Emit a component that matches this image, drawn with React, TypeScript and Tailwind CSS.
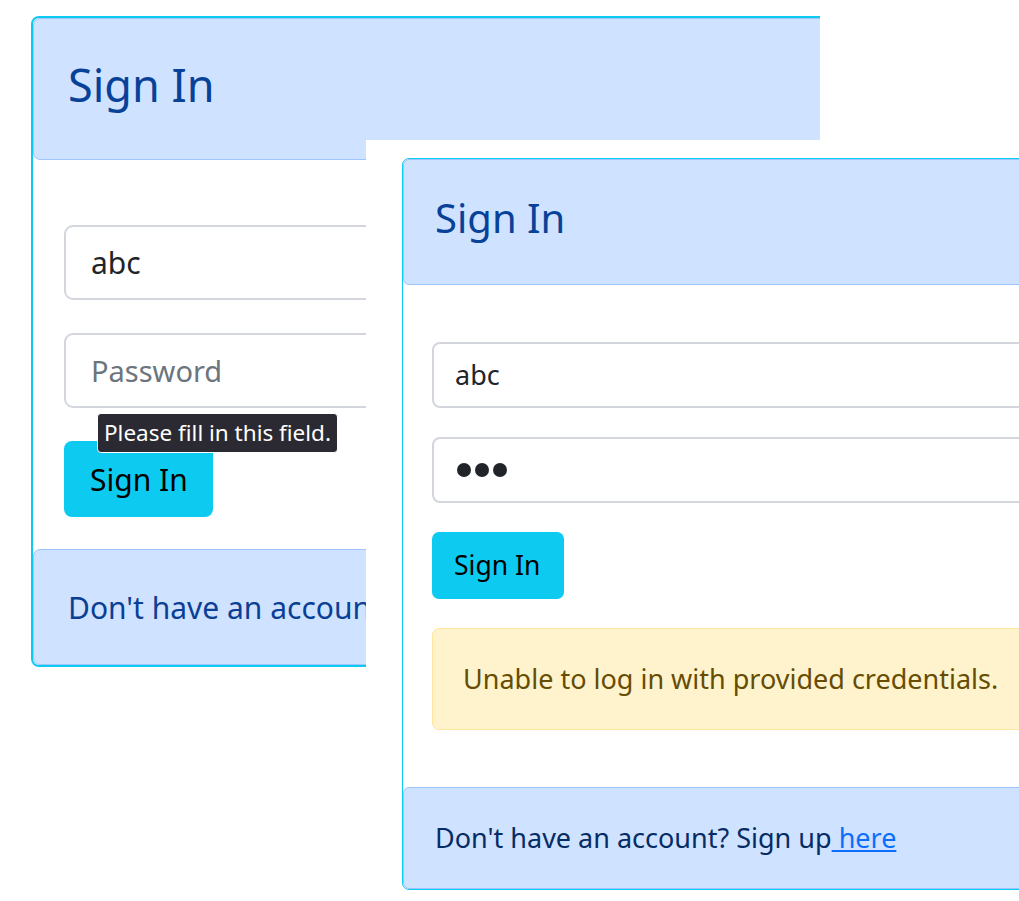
export default function App() {
  return (
    <div
      className="relative w-[1019px] h-[901px] overflow-hidden bg-white"
      style={{ fontFamily: '"Noto Sans", "Open Sans", sans-serif' }}
    >
      {/* First screenshot (larger, partly covered) */}
      <div className="absolute left-[31px] top-[16px] w-[789px] overflow-hidden">
        <div className="w-[1000px] border-2 border-[#0dcaf0] rounded-[8px] bg-white">
          <div className="h-[142px] flex items-center px-[34px] bg-[#cfe2ff] border border-[#9ec5fe] rounded-[7px]">
            <h1 className="text-[45px] leading-none text-[#084298] -mt-[10px]">Sign In</h1>
          </div>
          <div className="pt-[65px] pb-[32px] px-[31px] flex flex-col gap-[33px] items-start">
            <div className="w-full h-[75px] border-2 border-[#d3d7dd] rounded-[9px] flex items-center px-[25px] text-[30px] text-[#212529]">
              abc
            </div>
            <div className="w-full h-[75px] border-2 border-[#d3d7dd] rounded-[9px] flex items-center px-[25px] text-[29px] text-[#6c757d]">
              Password
            </div>
            <div className="relative">
              <button className="h-[76px] w-[149px] bg-[#0dcaf0] rounded-[8px] text-[30px] text-black text-left pl-[26px]">
                Sign In
              </button>
              <div className="absolute left-[33px] -top-[28px] h-[40px] px-[6px] flex items-center bg-[#2b2a33] border border-white rounded-[4px] text-white text-[22.5px] whitespace-nowrap">
                Please fill in this field.
              </div>
            </div>
          </div>
          <div className="h-[116px] flex items-center px-[34px] bg-[#cfe2ff] border border-[#9ec5fe] rounded-[7px]">
            <p className="text-[30px] text-[#0a3f96] whitespace-nowrap">
              Don't have an account? Sign up <a className="text-[#0d6efd] underline">here</a>
            </p>
          </div>
        </div>
      </div>

      {/* Second screenshot on top */}
      <div className="absolute left-[366px] top-[140px] right-0 bottom-0 bg-white overflow-hidden">
        <div className="ml-[36px] mt-[18px] w-[800px] border border-[#0dcaf0] rounded-[7px] bg-white">
          <div className="h-[126px] flex items-center px-[31px] bg-[#cfe2ff] border border-[#9ec5fe] rounded-[6px]">
            <h1 className="text-[40px] leading-none text-[#084298] -mt-[9px]">Sign In</h1>
          </div>
          <div className="pt-[57px] pb-[57px] px-[29px] flex flex-col gap-[29px] items-start">
            <div className="w-full h-[66px] border-2 border-[#d3d7dd] rounded-[8px] flex items-center px-[21px] text-[27px] text-[#212529]">
              abc
            </div>
            <div className="w-full h-[66px] border-2 border-[#d3d7dd] rounded-[8px] flex items-center px-[22px]">
              <span className="flex gap-[4px] ml-[1px]">
                <span className="w-[14px] h-[14px] rounded-full bg-[#212529]" />
                <span className="w-[14px] h-[14px] rounded-full bg-[#212529]" />
                <span className="w-[14px] h-[14px] rounded-full bg-[#212529]" />
              </span>
            </div>
            <button className="h-[67px] w-[132px] bg-[#0dcaf0] rounded-[7px] text-[26.5px] text-black text-left pl-[22px]">
              Sign In
            </button>
            <div className="w-full h-[102px] flex items-center px-[30px] bg-[#fff3cd] border border-[#ffe69c] rounded-[7px] text-[27px] text-[#664d03] whitespace-nowrap">
              Unable to log in with provided credentials.
            </div>
          </div>
          <div className="h-[102px] flex items-center px-[31px] bg-[#cfe2ff] border border-[#9ec5fe] rounded-[6px]">
            <p className="text-[27px] text-[#052c65] whitespace-nowrap">
              Don't have an account? Sign up<a className="text-[#0d6efd] underline"> here</a>
            </p>
          </div>
        </div>
      </div>
    </div>
  );
}
